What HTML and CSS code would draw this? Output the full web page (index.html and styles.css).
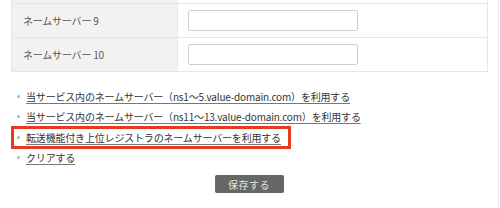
FILE: index.html
```html
<!DOCTYPE html>
<html lang="ja">
<head>
    <meta charset="UTF-8">
    <title>ネームサーバー設定</title>
    <link rel="stylesheet" href="styles.css">
</head>
<body>
    <div class="page">
        <table class="ns-table">
            <tr class="row-cut">
                <th></th>
                <td></td>
            </tr>
            <tr>
                <th>ネームサーバー 9</th>
                <td><input type="text"></td>
            </tr>
            <tr>
                <th>ネームサーバー 10</th>
                <td><input type="text"></td>
            </tr>
        </table>

        <ul class="preset-list">
            <li><a href="#">当サービス内のネームサーバー（ns1〜5.value-domain.com）を利用する</a></li>
            <li><a href="#">当サービス内のネームサーバー（ns11〜13.value-domain.com）を利用する</a></li>
            <li class="marked"><a href="#">転送機能付き上位レジストラのネームサーバーを利用する</a></li>
            <li><a href="#">クリアする</a></li>
        </ul>

        <div class="actions">
            <button class="save-btn">保存する</button>
        </div>
    </div>
</body>
</html>
```

FILE: styles.css
```css
/* Basic Layout */
body {
    margin: 0;
    font-family: "Noto Sans CJK JP", "Liberation Sans", sans-serif;
    font-size: 10px;
    color: #333;
    background: #fff;
}

.page {
    width: 498px;
    min-height: 208px;
    border-right: 1px solid #ececec;
    display: flow-root;
}

/* Name server table */
.ns-table {
    margin-left: 11px;
    width: 477px;
    border-collapse: collapse;
    border: 1px solid #e6e6e6;
    border-top: none;
}

.ns-table tr {
    height: 34px;
    border-bottom: 1px solid #e6e6e6;
}

.ns-table tr.row-cut {
    height: 3px;
}

.ns-table th {
    width: 154px;
    padding: 0 0 0 11px;
    background: #f2f2f2;
    border-right: 1px solid #e6e6e6;
    text-align: left;
    font-weight: normal;
    color: #555;
    letter-spacing: -0.2px;
}

.ns-table td {
    padding: 0 0 0 10px;
}

.ns-table input {
    display: block;
    width: 170px;
    height: 21px;
    box-sizing: border-box;
    border: 1px solid #cfcfcf;
    border-radius: 2px;
    margin: 0;
}

/* Preset links */
.preset-list {
    list-style: none;
    margin: 16px 0 0 14px;
    padding: 0;
    display: flex;
    flex-direction: column;
    gap: 3.5px;
}

.preset-list li {
    display: flex;
    align-items: center;
    width: fit-content;
    height: 17px;
    padding: 0 6px 0 3px;
}

.preset-list li::before {
    content: "";
    width: 3px;
    height: 3px;
    border-radius: 50%;
    background: #b5b5b5;
    margin-right: 6px;
}

.preset-list a {
    color: #333;
    letter-spacing: -0.18px;
    text-decoration: underline;
    text-decoration-color: #777;
    text-underline-offset: 2px;
}

.preset-list li.marked {
    padding-right: 7px;
    outline: 3px solid #e63b22;
}

/* Save button */
.actions {
    display: flex;
    justify-content: center;
    margin-top: 9px;
}

.save-btn {
    width: 69px;
    height: 18px;
    padding: 0;
    border: none;
    border-radius: 2px;
    background: #666;
    color: #e4e4e4;
    font-family: inherit;
    font-size: 10px;
    letter-spacing: 0.5px;
}
```
